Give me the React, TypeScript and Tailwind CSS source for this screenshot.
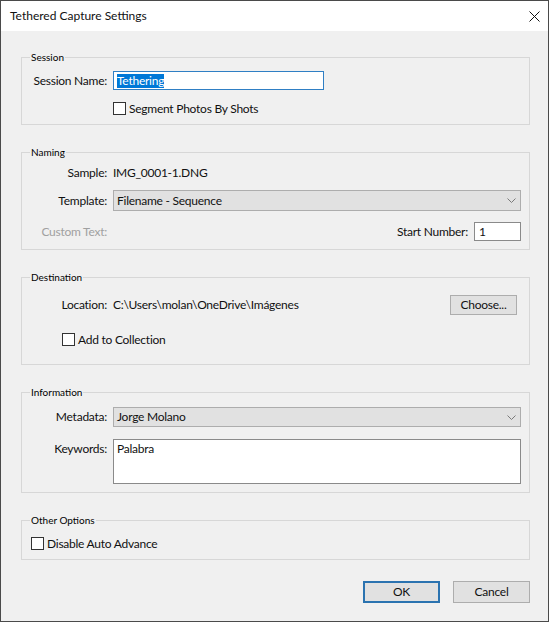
import React from "react";

const Chevron = () => (
  <svg width="9" height="5" viewBox="0 0 9 5" className="shrink-0">
    <path d="M0.5 0.5 L4.5 4.5 L8.5 0.5" fill="none" stroke="#7a7a7a" strokeWidth="1" />
  </svg>
);

const CloseIcon = () => (
  <svg width="11" height="11" viewBox="0 0 11 11">
    <path d="M0.5 0.5 L10.5 10.5 M10.5 0.5 L0.5 10.5" stroke="#111" strokeWidth="1" />
  </svg>
);

const Checkbox: React.FC<{ label: string }> = ({ label }) => (
  <div className="flex h-[13px] items-center gap-[3px]">
    <span className="h-[13px] w-[13px] shrink-0 border border-[#333] bg-white" />
    <span className="leading-[13px]">{label}</span>
  </div>
);

const Row: React.FC<{ label: string; className?: string; labelClassName?: string; children: React.ReactNode }> = ({
  label,
  className,
  labelClassName,
  children
}) => (
  <div className={`flex items-center ${className ?? ""}`}>
    <span className={`w-[85px] shrink-0 text-right ${labelClassName ?? ""}`}>{label}</span>
    <div className="ml-[6px] flex min-w-0 flex-1 items-center">{children}</div>
  </div>
);

const Group: React.FC<{ title: string; className?: string; children: React.ReactNode }> = ({
  title,
  className,
  children
}) => (
  <fieldset className={`border border-[#d7d7d7] ${className ?? ""}`}>
    <legend className="ml-[8px] px-[1px] text-[10px] leading-[12px] tracking-normal text-black">{title}</legend>
    {children}
  </fieldset>
);

const Select: React.FC<{ value: string; className?: string }> = ({ value, className }) => (
  <div
    className={`flex w-full items-center justify-between border border-[#adadad] bg-[#e1e1e1] pl-[3px] pr-[4px] ${className ?? ""}`}
  >
    <span>{value}</span>
    <Chevron />
  </div>
);

export default function App() {
  return (
    <div className="h-[622px] w-[549px] overflow-hidden border border-[#4a4a4a] bg-[#f0f0f0] font-['Lato','Noto_Sans',sans-serif] text-[12px] tracking-[-0.25px] text-[#111]">
      <div className="flex h-[30px] items-center justify-between bg-white pl-[9px] pr-[8px]">
        <span className="text-[12px] tracking-normal">Tethered Capture Settings</span>
        <CloseIcon />
      </div>

      <div className="pl-[20px] pr-[18px] pt-[20px]">
        <Group title="Session">
          <div className="pb-[9px] pr-[8px] pt-[8px]">
            <Row label="Session Name:">
              <div className="flex h-[19px] w-[211px] items-center border border-[#2f7fc4] bg-white pl-[3px]">
                <span className="bg-[#0078d7] leading-[14px] text-white">Tethering</span>
              </div>
            </Row>
            <div className="ml-[91px] mt-[12px]">
              <Checkbox label="Segment Photos By Shots" />
            </div>
          </div>
        </Group>

        <Group title="Naming" className="mt-[21px]">
          <div className="pb-[8px] pr-[8px] pt-[6px]">
            <Row label="Sample:" className="h-[18px]">
              <span>IMG_0001-1.DNG</span>
            </Row>
            <Row label="Template:" className="mt-[8px]">
              <Select value="Filename - Sequence" className="h-[21px]" />
            </Row>
            <Row label="Custom Text:" className="mt-[11px] h-[19px]" labelClassName="text-[#a0a0a0]">
              <div className="flex flex-1 items-center justify-end gap-[6px]">
                <span>Start Number:</span>
                <div className="flex h-[19px] w-[47px] items-center border border-[#8a8a8a] bg-white pl-[4px]">1</div>
              </div>
            </Row>
          </div>
        </Group>

        <Group title="Destination" className="mt-[21px]">
          <div className="pb-[18px] pr-[12px] pt-[12px]">
            <Row label="Location:">
              <div className="flex flex-1 items-center justify-between">
                <span>{"C:\\Users\\molan\\OneDrive\\Imágenes"}</span>
                <button className="h-[20px] w-[67px] border border-[#adadad] bg-[#e1e1e1] text-[12px]">Choose...</button>
              </div>
            </Row>
            <div className="ml-[40px] mt-[18px]">
              <Checkbox label="Add to Collection" />
            </div>
          </div>
        </Group>

        <Group title="Information" className="mt-[21px]">
          <div className="pb-[8px] pr-[8px] pt-[9px]">
            <Row label="Metadata:">
              <Select value="Jorge Molano" className="h-[20px]" />
            </Row>
            <div className="mt-[12px] flex items-start">
              <span className="mt-[1px] w-[85px] shrink-0 text-right">Keywords:</span>
              <div className="ml-[6px] h-[45px] flex-1 border border-[#8a8a8a] bg-white px-[3px]">Palabra</div>
            </div>
          </div>
        </Group>

        <Group title="Other Options" className="mt-[21px]">
          <div className="pb-[9px] pl-[9px] pt-[11px]">
            <Checkbox label="Disable Auto Advance" />
          </div>
        </Group>

        <div className="mt-[21px] flex justify-end gap-[13px]">
          <button className="h-[22px] w-[77px] border-2 border-[#2b73b0] bg-[#e1e1e1] text-[12px]">OK</button>
          <button className="h-[22px] w-[77px] border border-[#adadad] bg-[#e1e1e1] text-[12px]">Cancel</button>
        </div>
      </div>
    </div>
  );
}
